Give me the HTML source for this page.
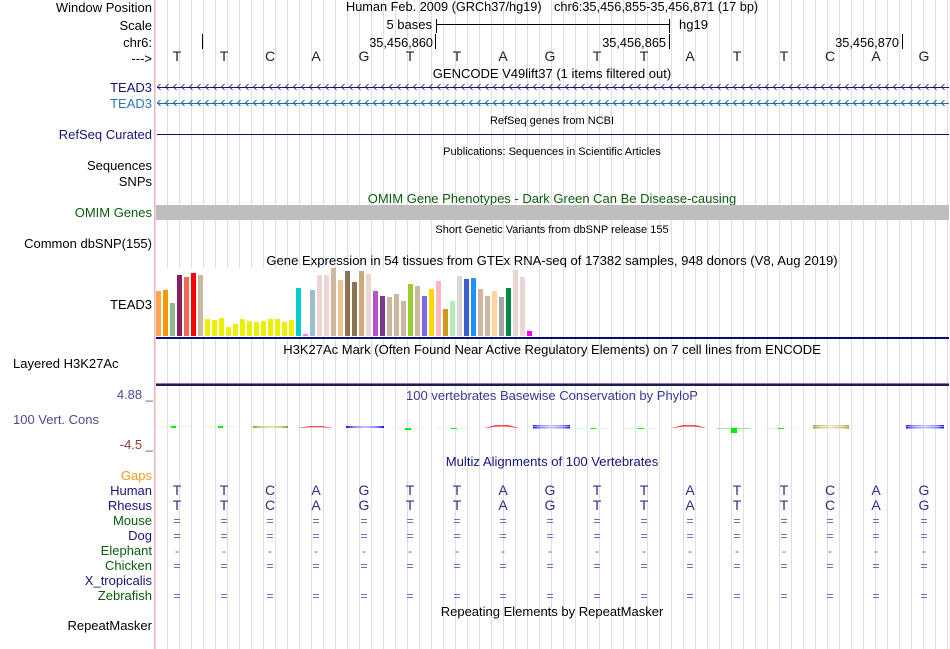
<!DOCTYPE html>
<html><head><meta charset="utf-8"><style>
html,body{margin:0;padding:0;background:#fff;width:950px;height:649px;overflow:hidden}
svg{display:block;font-family:"Liberation Sans",sans-serif;font-size:13px}
.r{text-anchor:end}.m{text-anchor:middle}
.n{fill:#15157a}.g{fill:#0a5c0a}.s{font-size:11px}.b{font-size:14px}.c{fill:#2f2f80;font-size:14px}
.h{font-size:12.75px}.w{font-size:13.1px}
.eq{fill:#5a5aa8;text-anchor:middle;font-size:12px}
</style></head><body>
<svg width="950" height="649" viewBox="0 0 950 649" xmlns="http://www.w3.org/2000/svg">
<defs>
<pattern id="grid" x="167" y="0" width="12" height="649" patternUnits="userSpaceOnUse"><rect x="0" y="0" width="1" height="649" fill="#dcdcf4"/></pattern>
<pattern id="ch1" x="157" y="81" width="8" height="12" patternUnits="userSpaceOnUse"><path d="M3.5 3 L0.5 6 L3.5 9" fill="none" stroke="#15157a" stroke-width="0.8"/></pattern>
<pattern id="ch2" x="157" y="97" width="8" height="12" patternUnits="userSpaceOnUse"><path d="M3.5 3 L0.5 6 L3.5 9" fill="none" stroke="#1a68a8" stroke-width="1"/></pattern>
<linearGradient id="gb"><stop offset="0" stop-color="#1010ff"/><stop offset=".2" stop-color="#8888ff"/><stop offset=".5" stop-color="#c4c4ff"/><stop offset=".8" stop-color="#8888ff"/><stop offset="1" stop-color="#1010ff"/></linearGradient>
<linearGradient id="gr"><stop offset="0" stop-color="#ff0000"/><stop offset=".25" stop-color="#ff3030"/><stop offset=".5" stop-color="#ff5050"/><stop offset=".75" stop-color="#ff3030"/><stop offset="1" stop-color="#ff0000"/></linearGradient>
<linearGradient id="go"><stop offset="0" stop-color="#a89a20"/><stop offset=".2" stop-color="#d0cc88"/><stop offset=".5" stop-color="#e4e2b8"/><stop offset=".8" stop-color="#d0cc88"/><stop offset="1" stop-color="#a89a20"/></linearGradient>
</defs>
<rect width="950" height="649" fill="#fff"/>
<rect x="155" y="0" width="795" height="649" fill="url(#grid)"/>
<rect x="154" y="0" width="1" height="649" fill="#ffb0b0"/>

<!-- left labels -->
<g>
<text x="152" y="12" class="r">Window Position</text>
<text x="152" y="30" class="r">Scale</text>
<text x="152" y="47" class="r">chr6:</text>
<text x="152" y="63" class="r">---&gt;</text>
<text x="152" y="92" class="r n">TEAD3</text>
<text x="152" y="108" class="r" fill="#2a7ab8">TEAD3</text>
<text x="152" y="139" class="r n">RefSeq Curated</text>
<text x="152" y="170" class="r">Sequences</text>
<text x="152" y="186" class="r">SNPs</text>
<text x="152" y="217" class="r g">OMIM Genes</text>
<text x="152" y="248" class="r">Common dbSNP(155)</text>
<text x="152" y="309" class="r">TEAD3</text>
</g>
<text x="13" y="368">Layered H3K27Ac</text>
<text x="153" y="399" class="r" fill="#4a4a9a">4.88 _</text>
<text x="13" y="424" fill="#4a4a9a">100 Vert. Cons</text>
<text x="153" y="449" class="r" fill="#8b3a3a">-4.5 _</text>
<text x="152" y="480" class="r" fill="#f59a23">Gaps</text>
<text x="152" y="495" class="r n">Human</text>
<text x="152" y="510" class="r n">Rhesus</text>
<text x="152" y="525" class="r g">Mouse</text>
<text x="152" y="540" class="r n">Dog</text>
<text x="152" y="555" class="r g">Elephant</text>
<text x="152" y="570" class="r g">Chicken</text>
<text x="152" y="585" class="r n">X_tropicalis</text>
<text x="152" y="600" class="r g">Zebrafish</text>
<text x="152" y="630" class="r">RepeatMasker</text>

<!-- header -->
<text x="346" y="11" class="h">Human Feb. 2009 (GRCh37/hg19)</text>
<text x="554" y="11" class="h">chr6:35,456,855-35,456,871 (17 bp)</text>
<text x="432" y="29" class="r">5 bases</text>
<path d="M436.5 19V33M436.5 24.5H669M669.5 19V33" stroke="#000" stroke-width="1" fill="none"/>
<text x="679" y="29">hg19</text>
<text x="433" y="47" class="r h">35,456,860</text>
<text x="666" y="47" class="r h">35,456,865</text>
<text x="899" y="47" class="r h">35,456,870</text>
<path d="M202.5 34V49M435.5 34V49M669.5 34V49M902.5 34V49" stroke="#000" stroke-width="1"/>
<g class="b" fill="#222">
<text x="177" y="61" class="m">T</text><text x="224" y="61" class="m">T</text><text x="270" y="61" class="m">C</text><text x="316" y="61" class="m">A</text><text x="364" y="61" class="m">G</text><text x="410" y="61" class="m">T</text><text x="457" y="61" class="m">T</text><text x="503" y="61" class="m">A</text><text x="550" y="61" class="m">G</text><text x="597" y="61" class="m">T</text><text x="644" y="61" class="m">T</text><text x="690" y="61" class="m">A</text><text x="737" y="61" class="m">T</text><text x="784" y="61" class="m">T</text><text x="830" y="61" class="m">C</text><text x="876" y="61" class="m">A</text><text x="924" y="61" class="m">G</text>
</g>
<text x="552" y="78" class="m">GENCODE V49lift37 (1 items filtered out)</text>

<!-- gene tracks -->
<rect x="157" y="87" width="792" height="1" fill="#15157a"/>
<rect x="157" y="81" width="792" height="12" fill="url(#ch1)"/>
<rect x="157" y="103" width="792" height="1" fill="#1f6fb0"/>
<rect x="157" y="97" width="792" height="12" fill="url(#ch2)"/>
<text x="552" y="124" class="m s">RefSeq genes from NCBI</text>
<rect x="157" y="134" width="792" height="1" fill="#0c0c78"/>
<text x="552" y="155" class="m s">Publications: Sequences in Scientific Articles</text>
<text x="552" y="203" class="m g">OMIM Gene Phenotypes - Dark Green Can Be Disease-causing</text>
<rect x="156" y="205" width="793" height="15" fill="#bebebe"/>
<text x="552" y="233" class="m s">Short Genetic Variants from dbSNP release 155</text>
<text x="552" y="265" class="m w">Gene Expression in 54 tissues from GTEx RNA-seq of 17382 samples, 948 donors (V8, Aug 2019)</text>

<!-- GTEx -->
<rect x="156" y="268" width="378" height="69" fill="#fff"/>
<g>
<rect x="156" y="291" width="5" height="45" fill="#FFA54F"/><rect x="163" y="290" width="5" height="46" fill="#EE9A00"/><rect x="170" y="303" width="5" height="33" fill="#8FBC8F"/><rect x="177" y="275" width="5" height="61" fill="#8B1C62"/><rect x="184" y="277" width="5" height="59" fill="#EE6A50"/><rect x="191" y="273" width="5" height="63" fill="#FF0000"/><rect x="198" y="275" width="5" height="61" fill="#CDB79E"/>
<rect x="205" y="319" width="5" height="17" fill="#EEEE00"/><rect x="212" y="320" width="5" height="16" fill="#EEEE00"/><rect x="219" y="318" width="5" height="18" fill="#EEEE00"/><rect x="226" y="327" width="5" height="9" fill="#EEEE00"/><rect x="233" y="324" width="5" height="12" fill="#EEEE00"/><rect x="240" y="319" width="5" height="17" fill="#EEEE00"/><rect x="247" y="321" width="5" height="15" fill="#EEEE00"/><rect x="254" y="322" width="5" height="14" fill="#EEEE00"/><rect x="261" y="321" width="5" height="15" fill="#EEEE00"/><rect x="268" y="319" width="5" height="17" fill="#EEEE00"/><rect x="275" y="319" width="5" height="17" fill="#EEEE00"/><rect x="282" y="322" width="5" height="14" fill="#EEEE00"/><rect x="289" y="320" width="5" height="16" fill="#EEEE00"/>
<rect x="296" y="288" width="5" height="48" fill="#00CDCD"/><rect x="303" y="334" width="5" height="2" fill="#EE82EE"/><rect x="310" y="290" width="5" height="46" fill="#9AC0CD"/><rect x="317" y="275" width="5" height="61" fill="#EED5D2"/><rect x="324" y="275" width="5" height="61" fill="#EED5D2"/><rect x="331" y="268" width="5" height="68" fill="#CDB79E"/><rect x="338" y="280" width="5" height="56" fill="#EEC591"/><rect x="345" y="271" width="5" height="65" fill="#8B7355"/><rect x="352" y="282" width="5" height="54" fill="#8B7355"/><rect x="359" y="271" width="5" height="65" fill="#CDAA7D"/><rect x="366" y="274" width="5" height="62" fill="#EED5D2"/><rect x="373" y="291" width="5" height="45" fill="#B452CD"/><rect x="380" y="296" width="5" height="40" fill="#7A378B"/><rect x="387" y="297" width="5" height="39" fill="#CDB79E"/><rect x="394" y="294" width="5" height="42" fill="#CDB79E"/><rect x="401" y="301" width="5" height="35" fill="#CDB79E"/><rect x="408" y="284" width="5" height="52" fill="#9ACD32"/><rect x="415" y="286" width="5" height="50" fill="#CDB79E"/><rect x="422" y="296" width="5" height="40" fill="#7A67EE"/><rect x="429" y="289" width="5" height="47" fill="#FFD700"/><rect x="436" y="281" width="5" height="55" fill="#FFB6C1"/><rect x="443" y="309" width="5" height="27" fill="#CD9B1D"/><rect x="450" y="301" width="5" height="35" fill="#B4EEB4"/><rect x="457" y="276" width="5" height="60" fill="#D9D9D9"/><rect x="464" y="279" width="5" height="57" fill="#3A5FCD"/><rect x="471" y="278" width="5" height="58" fill="#1E90FF"/><rect x="478" y="289" width="5" height="47" fill="#CDB79E"/><rect x="485" y="296" width="5" height="40" fill="#CDB79E"/><rect x="492" y="291" width="5" height="45" fill="#FFD39B"/><rect x="499" y="297" width="5" height="39" fill="#A6A6A6"/><rect x="506" y="288" width="5" height="48" fill="#008B45"/><rect x="513" y="270" width="5" height="66" fill="#EED5D2"/><rect x="520" y="277" width="5" height="59" fill="#EED5D2"/><rect x="527" y="331" width="5" height="5" fill="#FF00FF"/>
</g>
<rect x="156" y="337" width="793" height="2" fill="#0c0c78"/>
<text x="552" y="354" class="m">H3K27Ac Mark (Often Found Near Active Regulatory Elements) on 7 cell lines from ENCODE</text>
<rect x="156" y="383" width="793" height="1" fill="#9a6cc0"/>
<rect x="156" y="384" width="793" height="2" fill="#1c1c50"/>
<text x="552" y="400" class="m" fill="#3a3a90">100 vertebrates Basewise Conservation by PhyloP</text>

<!-- conservation -->
<g fill="#e0f8e0">
<rect x="157" y="426" width="33" height="1"/><rect x="204" y="426" width="33" height="1"/><rect x="391" y="428" width="33" height="1"/><rect x="437" y="428" width="33" height="1"/><rect x="577" y="428" width="33" height="1"/><rect x="624" y="428" width="33" height="1"/><rect x="764" y="428" width="33" height="1"/>
</g>
<rect x="717" y="428" width="33" height="1" fill="#90ee90"/>
<g fill="#00f000">
<rect x="171" y="426" width="5" height="2"/><rect x="218" y="426" width="5" height="2"/><rect x="405" y="428" width="6" height="2"/><rect x="451" y="428" width="6" height="1"/><rect x="591" y="428" width="5" height="1"/><rect x="638" y="428" width="6" height="1"/><rect x="731" y="428" width="6" height="5"/><rect x="778" y="428" width="6" height="1"/>
</g>
<rect x="253" y="426" width="35" height="2" fill="url(#go)"/>
<path d="M298 428 L310 426 L322 426 L333 428 L322 427.2 L310 427.2Z" fill="url(#gr)"/>
<path d="M484 428.3 L496 425 L508 425 L520 428.3 L508 426.6 L496 426.6Z" fill="url(#gr)"/>
<path d="M671 428.3 L683 425 L695 425 L707 428.3 L695 426.6 L683 426.6Z" fill="url(#gr)"/>
<rect x="346" y="426" width="38" height="2" fill="url(#gb)"/>
<rect x="533" y="425" width="37" height="1.5" fill="url(#gb)"/><rect x="533" y="427" width="37" height="1.5" fill="url(#gb)"/>
<rect x="906" y="425" width="38" height="1.5" fill="url(#gb)"/><rect x="906" y="427" width="38" height="1.5" fill="url(#gb)"/>
<rect x="813" y="425" width="36" height="1.5" fill="url(#go)"/><rect x="813" y="427" width="36" height="1.5" fill="url(#go)"/>

<text x="552" y="466" class="m w" fill="#15157a">Multiz Alignments of 100 Vertebrates</text>

<!-- alignment -->
<g class="c">
<text x="177" y="495" class="m">T</text><text x="224" y="495" class="m">T</text><text x="270" y="495" class="m">C</text><text x="316" y="495" class="m">A</text><text x="364" y="495" class="m">G</text><text x="410" y="495" class="m">T</text><text x="457" y="495" class="m">T</text><text x="503" y="495" class="m">A</text><text x="550" y="495" class="m">G</text><text x="597" y="495" class="m">T</text><text x="644" y="495" class="m">T</text><text x="690" y="495" class="m">A</text><text x="737" y="495" class="m">T</text><text x="784" y="495" class="m">T</text><text x="830" y="495" class="m">C</text><text x="876" y="495" class="m">A</text><text x="924" y="495" class="m">G</text>
<text x="177" y="510" class="m">T</text><text x="224" y="510" class="m">T</text><text x="270" y="510" class="m">C</text><text x="316" y="510" class="m">A</text><text x="364" y="510" class="m">G</text><text x="410" y="510" class="m">T</text><text x="457" y="510" class="m">T</text><text x="503" y="510" class="m">A</text><text x="550" y="510" class="m">G</text><text x="597" y="510" class="m">T</text><text x="644" y="510" class="m">T</text><text x="690" y="510" class="m">A</text><text x="737" y="510" class="m">T</text><text x="784" y="510" class="m">T</text><text x="830" y="510" class="m">C</text><text x="876" y="510" class="m">A</text><text x="924" y="510" class="m">G</text>
</g>
<g class="eq">
<text x="177" y="525">=</text><text x="224" y="525">=</text><text x="270" y="525">=</text><text x="316" y="525">=</text><text x="364" y="525">=</text><text x="410" y="525">=</text><text x="457" y="525">=</text><text x="503" y="525">=</text><text x="550" y="525">=</text><text x="597" y="525">=</text><text x="644" y="525">=</text><text x="690" y="525">=</text><text x="737" y="525">=</text><text x="784" y="525">=</text><text x="830" y="525">=</text><text x="876" y="525">=</text><text x="924" y="525">=</text>
<text x="177" y="540">=</text><text x="224" y="540">=</text><text x="270" y="540">=</text><text x="316" y="540">=</text><text x="364" y="540">=</text><text x="410" y="540">=</text><text x="457" y="540">=</text><text x="503" y="540">=</text><text x="550" y="540">=</text><text x="597" y="540">=</text><text x="644" y="540">=</text><text x="690" y="540">=</text><text x="737" y="540">=</text><text x="784" y="540">=</text><text x="830" y="540">=</text><text x="876" y="540">=</text><text x="924" y="540">=</text>
<text x="177" y="555">-</text><text x="224" y="555">-</text><text x="270" y="555">-</text><text x="316" y="555">-</text><text x="364" y="555">-</text><text x="410" y="555">-</text><text x="457" y="555">-</text><text x="503" y="555">-</text><text x="550" y="555">-</text><text x="597" y="555">-</text><text x="644" y="555">-</text><text x="690" y="555">-</text><text x="737" y="555">-</text><text x="784" y="555">-</text><text x="830" y="555">-</text><text x="876" y="555">-</text><text x="924" y="555">-</text>
<text x="177" y="570">=</text><text x="224" y="570">=</text><text x="270" y="570">=</text><text x="316" y="570">=</text><text x="364" y="570">=</text><text x="410" y="570">=</text><text x="457" y="570">=</text><text x="503" y="570">=</text><text x="550" y="570">=</text><text x="597" y="570">=</text><text x="644" y="570">=</text><text x="690" y="570">=</text><text x="737" y="570">=</text><text x="784" y="570">=</text><text x="830" y="570">=</text><text x="876" y="570">=</text><text x="924" y="570">=</text>
<text x="177" y="600">=</text><text x="224" y="600">=</text><text x="270" y="600">=</text><text x="316" y="600">=</text><text x="364" y="600">=</text><text x="410" y="600">=</text><text x="457" y="600">=</text><text x="503" y="600">=</text><text x="550" y="600">=</text><text x="597" y="600">=</text><text x="644" y="600">=</text><text x="690" y="600">=</text><text x="737" y="600">=</text><text x="784" y="600">=</text><text x="830" y="600">=</text><text x="876" y="600">=</text><text x="924" y="600">=</text>
</g>
<text x="552" y="616" class="m">Repeating Elements by RepeatMasker</text>
</svg>
</body></html>
